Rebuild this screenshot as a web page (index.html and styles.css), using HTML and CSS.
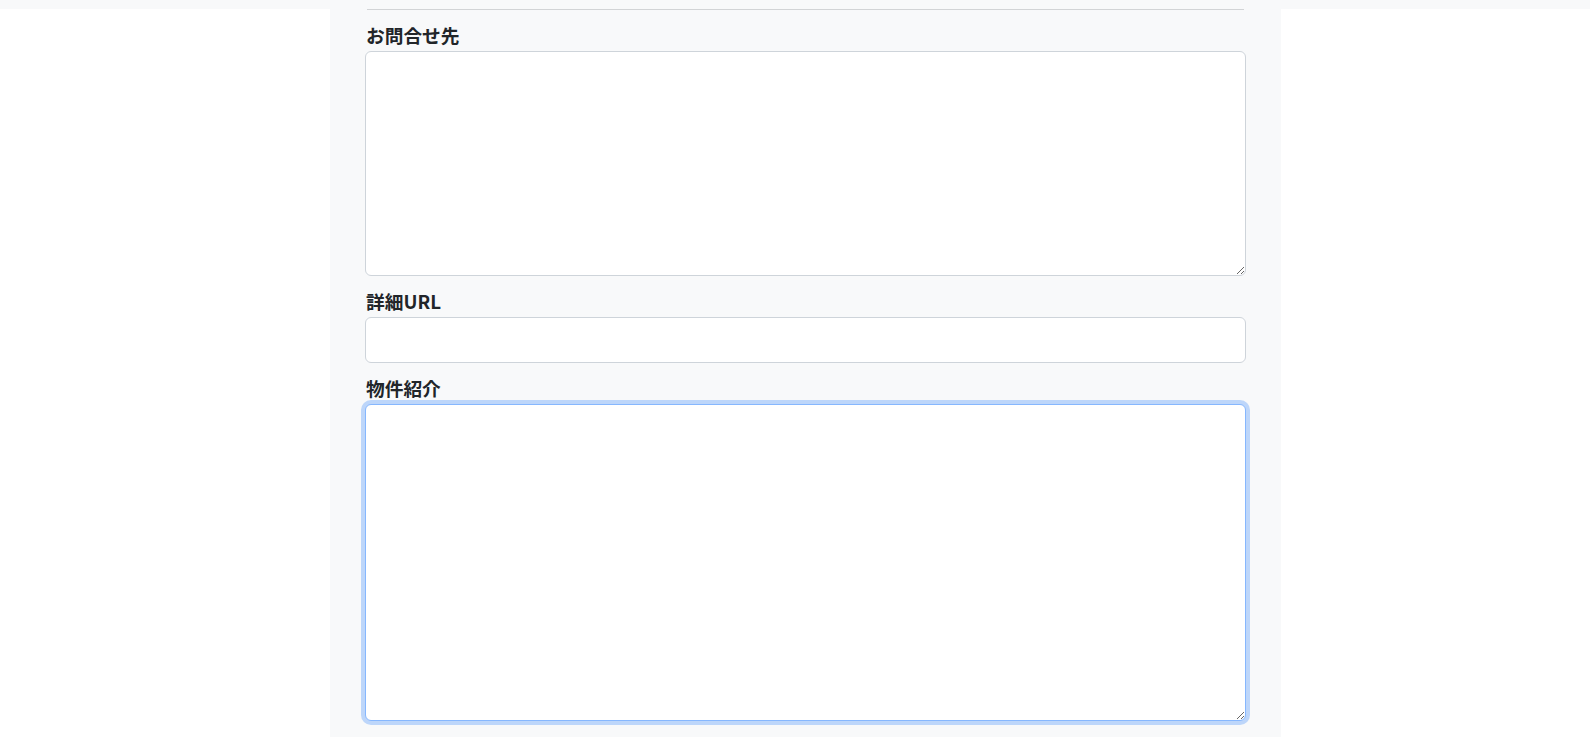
FILE: index.html
```html
<!DOCTYPE html>
<html lang="ja">
<head>
<meta charset="utf-8">
<title>物件登録</title>
<link rel="stylesheet" href="styles.css">
</head>
<body>
<div class="topband"></div>
<main class="column">
  <hr class="divider">
  <form class="form">
    <div class="group">
      <label class="label" for="contact">お問合せ先</label>
      <textarea id="contact" class="control area-contact"></textarea>
    </div>
    <div class="group">
      <label class="label" for="url">詳細URL</label>
      <input id="url" type="text" class="control input-url">
    </div>
    <div class="group">
      <label class="label" for="intro">物件紹介</label>
      <textarea id="intro" class="control area-intro is-focus"></textarea>
    </div>
  </form>
</main>
</body>
</html>
```
FILE: styles.css
```css
html, body {
  margin: 0;
  padding: 0;
  background: #ffffff;
  overflow: hidden;
}
body {
  font-family: "Noto Sans CJK JP", "Noto Sans", sans-serif;
  color: #212529;
}
.topband {
  height: 9px;
  background: #f8f9fa;
}
.column {
  width: 951px;
  margin-left: 330px;
  box-sizing: border-box;
  background: #f8f9fa;
  padding: 0 35px 16px;
}
.divider {
  margin: 0 2px;
  border: 0;
  border-top: 1px solid #d2d4d6;
  height: 0;
}
.form {
  display: flex;
  flex-direction: column;
  gap: 13px;
  padding-top: 13px;
}
.group {
  display: flex;
  flex-direction: column;
}
.label {
  font-size: 18.72px;
  line-height: 24px;
  font-weight: 600;
  margin-bottom: 4px;
  padding-left: 1px;
}
.control {
  display: block;
  box-sizing: border-box;
  width: 100%;
  margin: 0;
  border: 1px solid #ced4da;
  border-radius: 6px;
  background: #ffffff;
  font-family: inherit;
  font-size: 16px;
  padding: 6px 12px;
  outline: none;
}
.area-contact {
  height: 225px;
  resize: vertical;
}
.input-url {
  height: 46px;
}
.area-intro {
  height: 317px;
  resize: vertical;
}
.is-focus {
  border-color: #86b7fe;
  box-shadow: 0 0 0 4px rgba(13, 110, 253, 0.25);
}
```
